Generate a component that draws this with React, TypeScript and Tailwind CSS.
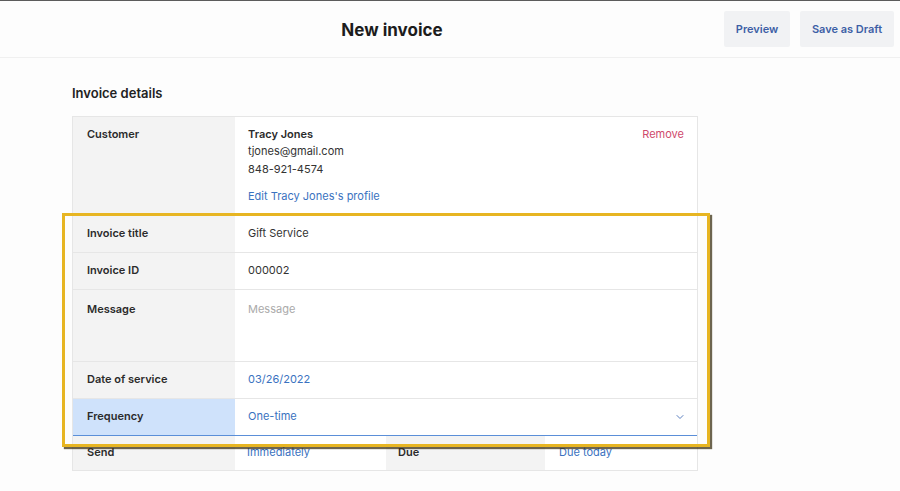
import { ChevronDown } from "lucide-react";

const labelCell = "w-[162px] shrink-0 bg-[#f3f3f3] px-[14px] font-semibold text-[#2b2b2b]";

function Row({ label, children, className = "" }: { label: string; children: React.ReactNode; className?: string }) {
  return (
    <div className={`flex h-[37px] border-t border-[#e6e6e6] ${className}`}>
      <div className={`${labelCell} flex items-center`}>{label}</div>
      <div className="flex flex-1 items-center px-[13px]">{children}</div>
    </div>
  );
}

export default function App() {
  return (
    <div
      className="min-h-[491px] bg-[#fdfdfd] text-[11px] text-[#333]"
      style={{ fontFamily: "Inter, 'Liberation Sans', sans-serif" }}
    >
      <header className="flex h-[58px] items-center gap-[10px] border-t border-b border-t-[#5c5c5c] border-b-[#f0f0f0] pr-[6px]">
        <h1 className="flex-1 pl-[70px] pt-[3px] text-center text-[17px] font-bold text-[#1c1c1c]">New invoice</h1>
        <button className="h-[36px] w-[66px] rounded-[2px] bg-[#f1f2f4] text-[11px] font-semibold text-[#3d5fa6]">
          Preview
        </button>
        <button className="h-[36px] w-[94px] rounded-[2px] bg-[#f1f2f4] text-[11px] font-semibold text-[#3d5fa6]">
          Save as Draft
        </button>
      </header>

      <main className="relative pl-[72px] pt-[26px]">
        <h2 className="mb-[12px] text-[13px] font-semibold text-[#222]">Invoice details</h2>

        <div className="w-[626px] border border-[#e6e6e6] bg-white">
          <div className="flex h-[98px]">
            <div className={`${labelCell} pt-[9px]`}>Customer</div>
            <div className="flex flex-1 justify-between px-[13px] pt-[9px] leading-[17.5px]">
              <div>
                <div className="font-semibold text-[#2b2b2b]">Tracy Jones</div>
                <div>tjones@gmail.com</div>
                <div>848-921-4574</div>
                <div className="mt-[10px] text-[#3a72c0]">Edit Tracy Jones's profile</div>
              </div>
              <div className="text-[#cf4a6c]">Remove</div>
            </div>
          </div>

          <Row label="Invoice title">Gift Service</Row>
          <Row label="Invoice ID">000002</Row>

          <div className="flex h-[72px] border-t border-[#e6e6e6]">
            <div className={`${labelCell} pt-[11px]`}>Message</div>
            <div className="flex-1 px-[13px] pt-[11px] text-[#aaa]">Message</div>
          </div>

          <Row label="Date of service">
            <span className="text-[#3a72c0]">03/26/2022</span>
          </Row>

          <div className="flex h-[37px] border-t border-[#e6e6e6]">
            <div className="flex w-[162px] shrink-0 items-center bg-[#cfe2fb] px-[14px] font-semibold text-[#2b2b2b]">
              Frequency
            </div>
            <div className="flex flex-1 items-center justify-between px-[13px] text-[#3a72c0]">
              <span>One-time</span>
              <ChevronDown className="mr-[-2px] h-[12px] w-[12px] text-[#5b7fbf]" strokeWidth={2} />
            </div>
          </div>
          <div className="h-px bg-[#5b8fd8]" />

          <div className="flex h-[34px]">
            <div className={`${labelCell} flex items-center`}>Send</div>
            <div className="flex w-[151px] items-center px-[12px] text-[#3a72c0]">Immediately</div>
            <div className="flex w-[159px] items-center bg-[#f3f3f3] px-[12px] font-semibold text-[#2b2b2b]">Due</div>
            <div className="flex flex-1 items-center px-[14px] text-[#3a72c0]">Due today</div>
          </div>
        </div>

        <div className="pointer-events-none absolute left-[62px] top-[155px] h-[234px] w-[648px] border-[3px] border-[#e7b522] shadow-[2px_2px_1px_rgba(60,50,20,0.75)]" />
      </main>
    </div>
  );
}
